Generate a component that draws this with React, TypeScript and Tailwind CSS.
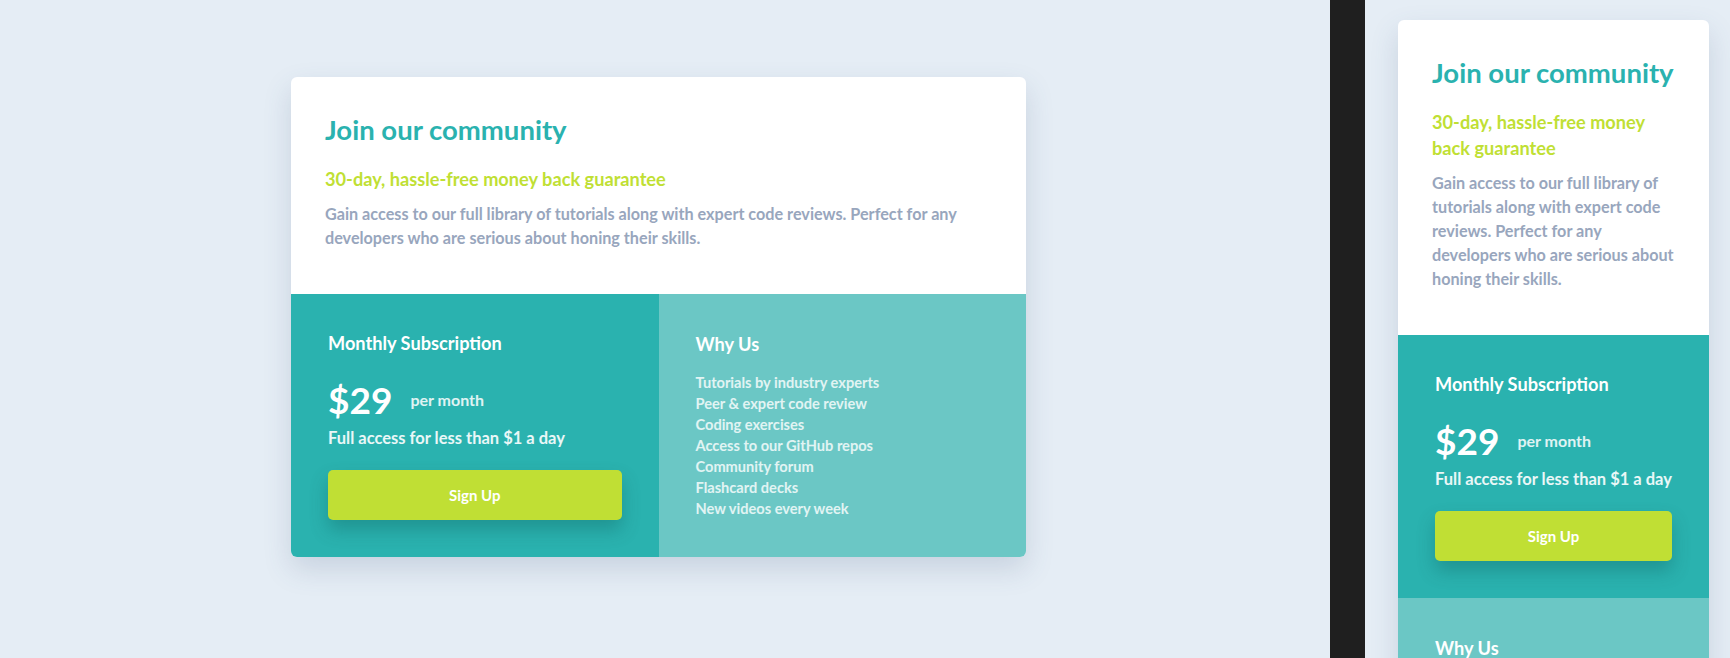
import React from 'react';

const features = [
    'Tutorials by industry experts',
    'Peer & expert code review',
    'Coding exercises',
    'Access to our GitHub repos',
    'Community forum',
    'Flashcard decks',
    'New videos every week',
];

function PriceCard({ mobile }: { mobile?: boolean }) {
    return (
        <div
            className={
                'overflow-hidden rounded-[6px] bg-white shadow-[0_12px_28px_rgba(64,89,128,0.18)] ' +
                (mobile ? 'w-[311px]' : 'w-[735px]')
            }
        >
            {/* top */}
            <div className="pl-[34px] pr-[30px] pt-[37px] pb-[44px]">
                <h1 className="text-[27.5px] leading-[32px] font-bold text-[#2ab2af]">Join our community</h1>
                <h2 className="mt-[20px] text-[18.2px] leading-[26px] font-bold text-[#c0df34]">
                    {mobile ? (
                        <>
                            30-day, hassle-free money
                            <br />
                            back guarantee
                        </>
                    ) : (
                        '30-day, hassle-free money back guarantee'
                    )}
                </h2>
                <p className="mt-[10px] whitespace-nowrap text-[16.2px] leading-[24px] font-bold text-[#98a6bd]">
                    {mobile ? (
                        <>
                            Gain access to our full library of
                            <br />
                            tutorials along with expert code
                            <br />
                            reviews. Perfect for any
                            <br />
                            developers who are serious about
                            <br />
                            honing their skills.
                        </>
                    ) : (
                        <>
                            Gain access to our full library of tutorials along with expert code reviews. Perfect for any
                            <br />
                            developers who are serious about honing their skills.
                        </>
                    )}
                </p>
            </div>

            {/* bottom */}
            <div className={mobile ? 'flex flex-col' : 'grid grid-cols-2'}>
                <div className="bg-[#2ab2af] px-[37px] pt-[37px] pb-[37px] text-white">
                    <h3 className="text-[18.2px] leading-[24px] font-bold">Monthly Subscription</h3>
                    <div className="mt-[25px] flex items-center h-[40px]">
                        <span className="text-[37px] leading-[40px] font-bold">$29</span>
                        <span className="ml-[18px] text-[16px] font-bold text-white/85">per month</span>
                    </div>
                    <p className="mt-[6px] text-[16.5px] leading-[24px] font-bold text-white/90">
                        Full access for less than $1 a day
                    </p>
                    <button className="mt-[20px] flex h-[50px] w-full items-center justify-center rounded-[5px] bg-[#c0df34] text-[15px] font-bold text-white shadow-[0_10px_18px_rgba(10,80,80,0.3)]">
                        Sign Up
                    </button>
                </div>
                <div className="bg-[#6bc7c5] px-[37px] pt-[38px] pb-[37px] text-white">
                    <h3 className="text-[18.2px] leading-[24px] font-bold">Why Us</h3>
                    <ul className="mt-[16px]">
                        {features.map((f) => (
                            <li key={f} className="text-[14.6px] leading-[21px] font-bold text-white/80">
                                {f}
                            </li>
                        ))}
                    </ul>
                </div>
            </div>
        </div>
    );
}

export default function App() {
    return (
        <div className="flex h-[658px] w-[1730px] overflow-hidden bg-[#e5edf5] font-['Lato',sans-serif]">
            <div className="w-[1330px] shrink-0 pt-[77px] pl-[291px]">
                <PriceCard />
            </div>
            <div className="w-[35px] shrink-0 bg-[#1f1f1f]" />
            <div className="flex-1 pt-[20px] pl-[33px]">
                <PriceCard mobile />
            </div>
        </div>
    );
}
